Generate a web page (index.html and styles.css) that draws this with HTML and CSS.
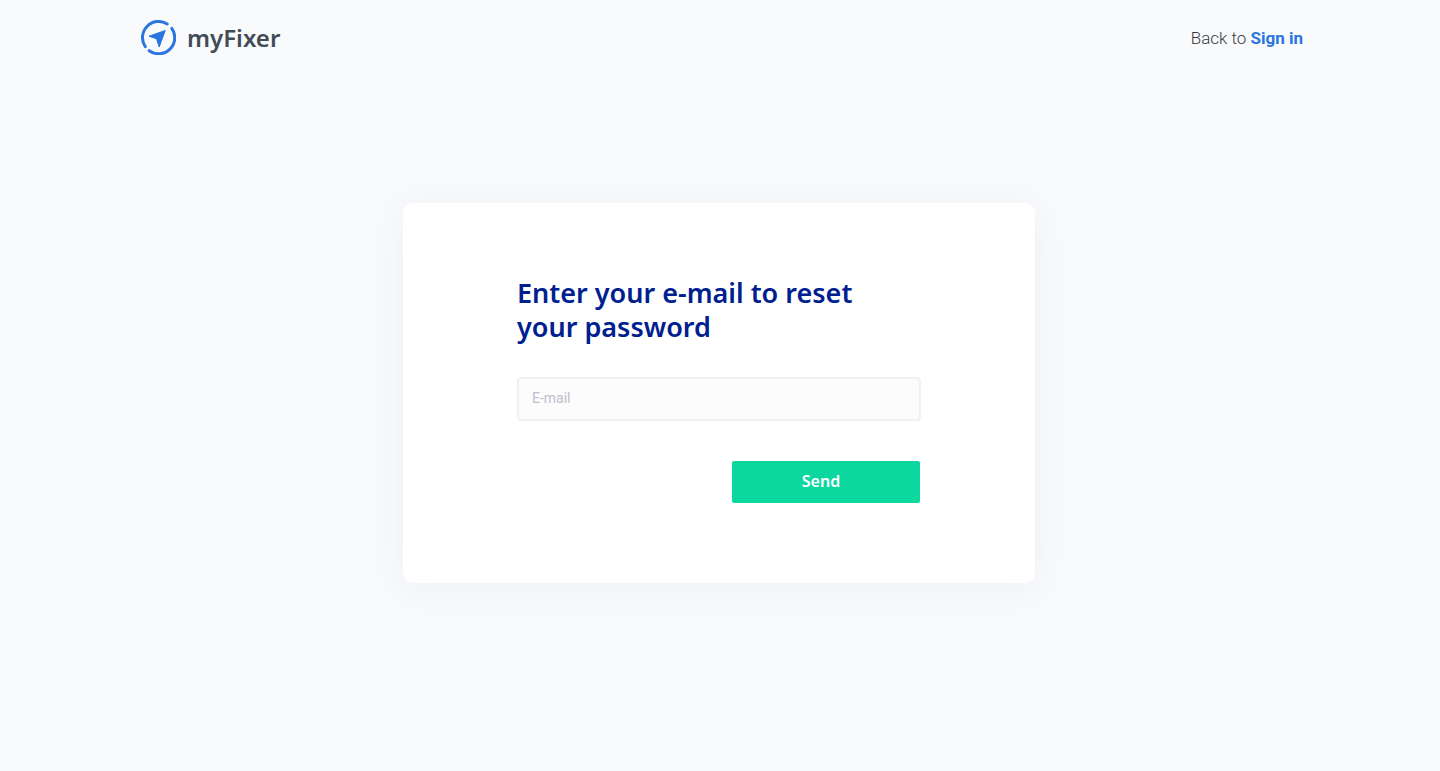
FILE: index.html
```html
<!DOCTYPE html>
<html lang="en">
<head>
  <meta charset="utf-8">
  <meta name="viewport" content="width=device-width, initial-scale=1">
  <title>myFixer</title>
  <link rel="stylesheet" href="styles.css">
</head>
<body>
  <header class="header">
    <a class="brand" href="#">
      <svg class="brand-icon" viewBox="0 0 35 35" aria-hidden="true">
        <g fill="none" stroke="currentColor" stroke-width="3" stroke-linecap="round">
          <path d="M26.2 4A16.1 16.1 0 0 0 4.3 26.7"/>
          <path d="M30.8 8.4A16.1 16.1 0 0 1 8.2 30.7"/>
        </g>
        <path fill="currentColor" stroke="currentColor" stroke-linejoin="round" d="M24.2 10.5L8 16.2L15.5 18.8L18.2 27Z"/>
      </svg>
      <span class="brand-name">myFixer</span>
    </a>
    <p class="back">Back to <a class="back-link" href="#">Sign in</a></p>
  </header>
  <main class="main">
    <form class="card">
      <h1 class="title">Enter your e-mail to reset your password</h1>
      <input class="field" type="email" placeholder="E-mail" aria-label="E-mail">
      <button class="send" type="submit">Send</button>
    </form>
  </main>
</body>
</html>
```
FILE: styles.css
```css
* {
  box-sizing: border-box;
}

body {
  display: flex;
  flex-direction: column;
  min-height: 100vh;
  margin: 0;
  background: #f9fafc;
  color: #38393c;
  font-family: Roboto, sans-serif;
}

.header {
  display: flex;
  align-items: center;
  justify-content: space-between;
  padding: 20px 137px 20px 141px;
}

.brand {
  display: flex;
  align-items: center;
  gap: 11px;
  color: #2a75e0;
  text-decoration: none;
}

.brand-icon {
  width: 35px;
  height: 35px;
}

.brand-name {
  color: #414c58;
  font: 600 24px/35px "Noto Sans", sans-serif;
}

.back {
  margin: 0;
  font-size: 17px;
  font-weight: 300;
  line-height: 20px;
}

.back-link {
  color: #2a75e0;
  font-weight: 700;
  text-decoration: none;
}

.main {
  display: flex;
  flex: 1;
  align-items: center;
  justify-content: center;
  padding: 0 2px 60px 0;
}

.card {
  display: flex;
  flex-direction: column;
  width: 100%;
  max-width: 632px;
  padding: 73px 114px 80px;
  border-radius: 10px;
  background: #fff;
  box-shadow: 0 5px 40px rgba(38, 65, 140, 0.06);
}

.title {
  max-width: 380px;
  margin: 0 0 33px;
  color: #00208f;
  font: 600 27px/34px "Noto Sans", sans-serif;
}

.field {
  width: 100%;
  height: 44px;
  padding: 0 13px 2px;
  border: 2px solid #f1f1f2;
  border-radius: 4px;
  background: #fcfcfc;
  color: #38393c;
  font: 400 14px Roboto, sans-serif;
}

.field::placeholder {
  color: #bcbfcd;
}

.send {
  align-self: flex-end;
  width: 188px;
  height: 42px;
  margin: 40px 1px 0 0;
  padding: 0 10px 2px 0;
  border: 0;
  border-radius: 2px;
  background: #0bd79f;
  color: #fff;
  font: 600 16px "Noto Sans", sans-serif;
}
```
